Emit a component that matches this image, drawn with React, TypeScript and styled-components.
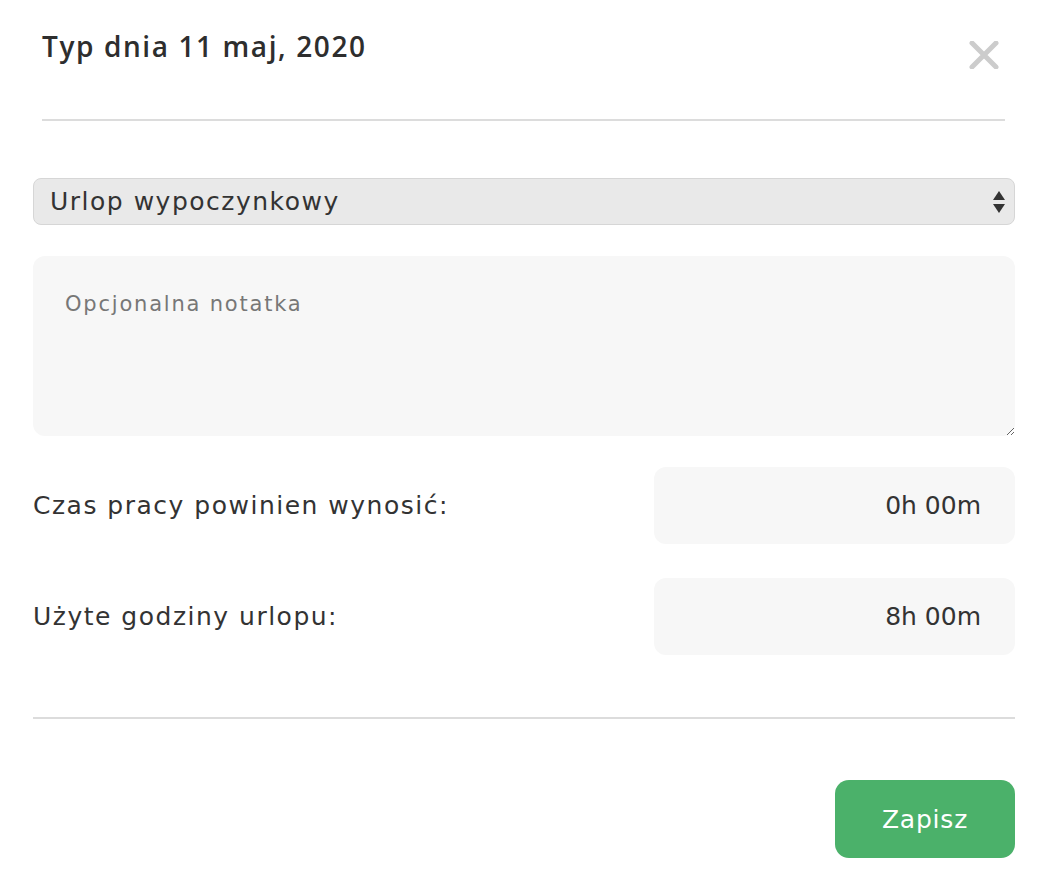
import React from "react";
import styled, { createGlobalStyle } from "styled-components";

const GlobalStyle = createGlobalStyle`
  html, body {
    margin: 0;
    padding: 0;
    background: #ffffff;
  }
  body {
    font-family: "DejaVu Sans", "Open Sans", sans-serif;
    color: #333333;
  }
`;

function App() {
  const [type, setType] = React.useState("urlop");
  const [note, setNote] = React.useState("");

  return (
    <>
      <GlobalStyle />
      <Modal>
        <Header>
          <Title>Typ dnia 11 maj, 2020</Title>
          <CloseButton aria-label="Zamknij">
            <svg width="30" height="28" viewBox="0 0 30 28">
              <path
                d="M3 2 L27 26 M27 2 L3 26"
                stroke="#cccccc"
                strokeWidth="5"
                strokeLinecap="round"
              />
            </svg>
          </CloseButton>
        </Header>

        <Body>
          <SelectWrapper>
            <Select value={type} onChange={(e) => setType(e.target.value)}>
              <option value="urlop">Urlop wypoczynkowy</option>
              <option value="praca">Dzień pracujący</option>
              <option value="chorobowe">Zwolnienie lekarskie</option>
            </Select>
            <SelectArrows width="12" height="24" viewBox="0 0 12 24">
              <path d="M6 1 L12 10 L0 10 Z" fill="#333333" />
              <path d="M0 14 L12 14 L6 23 Z" fill="#333333" />
            </SelectArrows>
          </SelectWrapper>

          <NoteArea
            placeholder="Opcjonalna notatka"
            value={note}
            onChange={(e) => setNote(e.target.value)}
          />

          <Row>
            <Label>Czas pracy powinien wynosić:</Label>
            <ValueBox>0h 00m</ValueBox>
          </Row>
          <Row>
            <Label>Użyte godziny urlopu:</Label>
            <ValueBox>8h 00m</ValueBox>
          </Row>
        </Body>

        <Footer>
          <SaveButton>Zapisz</SaveButton>
        </Footer>
      </Modal>
    </>
  );
}

const Modal = styled.div`
  display: flex;
  flex-direction: column;
  width: 1038px;
  padding: 0 23px 0 33px;
  box-sizing: border-box;
`;

const Header = styled.div`
  display: flex;
  justify-content: space-between;
  align-items: flex-start;
  margin: 0 10px 0 9px;
  padding: 26px 0 50px;
  border-bottom: 2px solid #dcdcdc;
`;

const Title = styled.h2`
  margin: 0;
  font-family: "Open Sans", sans-serif;
  font-size: 28px;
  font-weight: 600;
  line-height: 40px;
  color: #2e2e2e;
  letter-spacing: 1.6px;
`;

const CloseButton = styled.button`
  display: flex;
  background: none;
  border: none;
  padding: 0;
  margin: 15px 6px 0 0;
  cursor: pointer;
`;

const Body = styled.div`
  display: flex;
  flex-direction: column;
  padding-top: 57px;
`;

const SelectWrapper = styled.div`
  position: relative;
`;

const Select = styled.select`
  appearance: none;
  width: 100%;
  height: 47px;
  padding: 0 40px 0 16px;
  border: 1.5px solid #d6d6d6;
  border-radius: 8px;
  background: #e9e9e9;
  font-family: inherit;
  font-size: 25px;
  letter-spacing: 1.5px;
  color: #333333;
  outline: none;
`;

const SelectArrows = styled.svg`
  position: absolute;
  right: 10px;
  top: 12px;
  pointer-events: none;
`;

const NoteArea = styled.textarea`
  margin-top: 31px;
  height: 180px;
  box-sizing: border-box;
  padding: 36px 32px;
  border: none;
  border-radius: 12px;
  background: #f7f7f7;
  font-family: inherit;
  font-size: 21px;
  letter-spacing: 1.8px;
  color: #333333;
  resize: vertical;
  outline: none;

  &::placeholder {
    color: #777777;
  }
`;

const Row = styled.div`
  display: flex;
  align-items: center;
  justify-content: space-between;
  margin-top: 31px;

  & + & {
    margin-top: 34px;
  }
`;

const Label = styled.div`
  font-size: 25px;
  letter-spacing: 1.5px;
  color: #333333;
`;

const ValueBox = styled.div`
  display: flex;
  align-items: center;
  justify-content: flex-end;
  width: 361px;
  height: 77px;
  box-sizing: border-box;
  padding-right: 34px;
  border-radius: 12px;
  background: #f7f7f7;
  font-size: 25px;
  color: #333333;
`;

const Footer = styled.div`
  display: flex;
  justify-content: flex-end;
  margin-top: 62px;
  padding-top: 61px;
  border-top: 2px solid #dcdcdc;
`;

const SaveButton = styled.button`
  width: 180px;
  height: 78px;
  border: none;
  border-radius: 14px;
  background: #4bb16a;
  color: #ffffff;
  font-family: inherit;
  font-size: 25px;
  letter-spacing: 0.8px;
  cursor: pointer;
`;

export default App;
